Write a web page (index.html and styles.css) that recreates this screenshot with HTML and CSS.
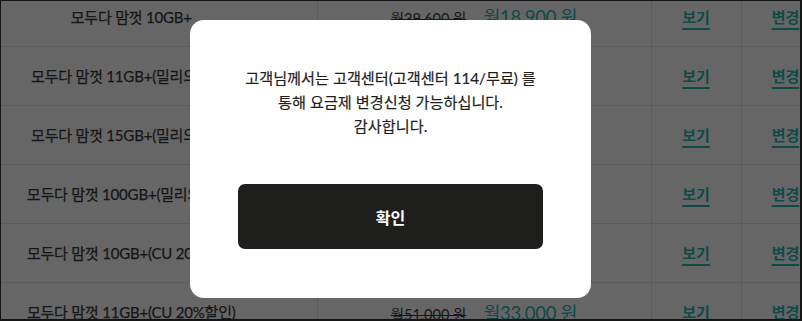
FILE: index.html
```html
<!DOCTYPE html>
<html lang="ko">
<head>
<meta charset="utf-8">
<title>요금제 변경</title>
<link rel="stylesheet" href="styles.css">
</head>
<body>
<div class="frame">
  <table class="plans">
    <colgroup>
      <col class="c-name"><col class="c-price"><col class="c-view"><col class="c-change">
    </colgroup>
    <tbody>
      <tr>
        <td class="name">모두다 맘껏 10GB+</td>
        <td class="price"><span class="old">월39,600 원</span><span class="new">월18,900 원</span></td>
        <td class="link"><a href="#">보기</a></td>
        <td class="link"><a href="#">변경</a></td>
      </tr>
      <tr>
        <td class="name">모두다 맘껏 11GB+(밀리의 서재)</td>
        <td class="price"><span class="old">월51,000 원</span><span class="new">월33,000 원</span></td>
        <td class="link"><a href="#">보기</a></td>
        <td class="link"><a href="#">변경</a></td>
      </tr>
      <tr>
        <td class="name">모두다 맘껏 15GB+(밀리의 서재)</td>
        <td class="price"><span class="old">월56,000 원</span><span class="new">월38,000 원</span></td>
        <td class="link"><a href="#">보기</a></td>
        <td class="link"><a href="#">변경</a></td>
      </tr>
      <tr>
        <td class="name">모두다 맘껏 100GB+(밀리의 서재)</td>
        <td class="price"><span class="old">월69,000 원</span><span class="new">월49,000 원</span></td>
        <td class="link"><a href="#">보기</a></td>
        <td class="link"><a href="#">변경</a></td>
      </tr>
      <tr>
        <td class="name">모두다 맘껏 10GB+(CU 20%할인)</td>
        <td class="price"><span class="old">월39,600 원</span><span class="new">월18,900 원</span></td>
        <td class="link"><a href="#">보기</a></td>
        <td class="link"><a href="#">변경</a></td>
      </tr>
      <tr>
        <td class="name">모두다 맘껏 11GB+(CU 20%할인)</td>
        <td class="price"><span class="old">월51,000 원</span><span class="new">월33,000 원</span></td>
        <td class="link"><a href="#">보기</a></td>
        <td class="link"><a href="#">변경</a></td>
      </tr>
    </tbody>
  </table>

  <div class="modal" role="dialog">
    <p class="msg">고객님께서는 고객센터(고객센터 114/무료) 를<br>통해 요금제 변경신청 가능하십니다.<br>감사합니다.</p>
    <button class="ok" type="button">확인</button>
  </div>
</div>
</body>
</html>
```

FILE: styles.css
```css
* { box-sizing: border-box; }

html, body {
  margin: 0;
  padding: 0;
  overflow: hidden;
}

body {
  font-family: Lato, "Noto Sans CJK KR", "Noto Sans", sans-serif;
  background: #111;
}

.frame {
  position: relative;
  width: 802px;
  height: 321px;
  overflow: hidden;
  background: #666666;
  border-top: 1px solid #141414;
  border-left: 1px solid #141414;
  border-right: 2px solid #141414;
  border-bottom: 2px solid #141414;
}

.plans {
  table-layout: fixed;
  border-collapse: collapse;
  width: 830px;
  margin-top: -14px;
  margin-left: -1px;
}

.c-name { width: 317px; }
.c-price { width: 334px; }
.c-view { width: 90px; }
.c-change { width: 89px; }

.plans td {
  height: 59px;
  padding: 0;
  border-bottom: 1px solid #5c5c5c;
  border-right: 1px solid #5c5c5c;
  vertical-align: middle;
  text-align: center;
  white-space: nowrap;
  overflow: hidden;
}

.name {
  padding-right: 54px !important;
  font-size: 15px;
  letter-spacing: -0.2px;
  color: #161616;
  -webkit-text-stroke: 0.25px #161616;
}

.price .old {
  font-size: 14.5px;
  color: #161616;
  text-decoration: line-through;
  margin-right: 17px;
}

.price .new {
  font-size: 18.5px;
  letter-spacing: -0.3px;
  color: #0e4a46;
}

.link a {
  font-size: 15px;
  font-weight: 700;
  color: #0e4a46;
  text-decoration: underline;
  text-decoration-thickness: 2px;
  text-underline-offset: 5px;
}

.modal {
  position: absolute;
  left: 189px;
  top: 19px;
  width: 401px;
  height: 278px;
  background: #ffffff;
  border-radius: 14px;
  padding: 46px 48px 48px 48px;
  display: flex;
  flex-direction: column;
  align-items: stretch;
}

.msg {
  margin: 0 0 46px;
  font-size: 15.2px;
  line-height: 24px;
  color: #1e1e1e;
  text-align: center;
  -webkit-text-stroke: 0.2px #1e1e1e;
}

.ok {
  height: 65px;
  border: 0;
  border-radius: 7px;
  background: #1e1e1c;
  color: #ffffff;
  font-family: inherit;
  font-size: 16px;
  font-weight: 700;
}
```
